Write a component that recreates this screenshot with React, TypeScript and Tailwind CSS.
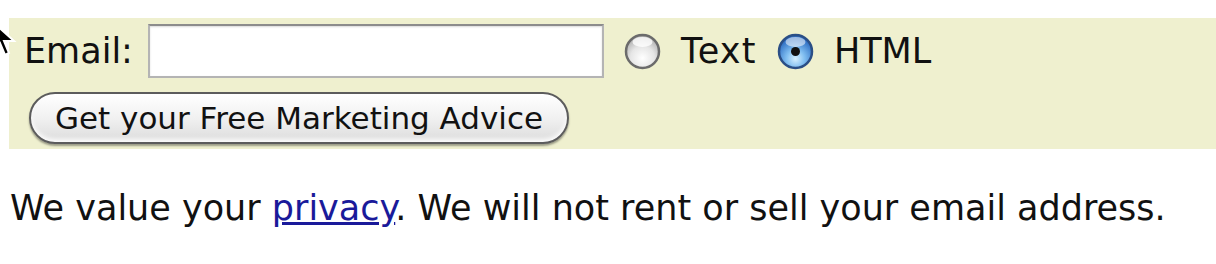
import { useState } from 'react';

// Newsletter signup strip: email field, format radios, submit button, privacy note

function AquaRadio({ checked }: { checked: boolean }) {
  return (
    <svg width="37" height="37" viewBox="0 0 37 37" aria-hidden="true">
      <defs>
        <radialGradient id="rg-off" cx="50%" cy="70%" r="60%">
          <stop offset="0%" stopColor="#ffffff" />
          <stop offset="60%" stopColor="#e6e6e6" />
          <stop offset="100%" stopColor="#b9b9b9" />
        </radialGradient>
        <radialGradient id="rg-on" cx="50%" cy="72%" r="62%">
          <stop offset="0%" stopColor="#d6f0ff" />
          <stop offset="45%" stopColor="#7fbdf0" />
          <stop offset="100%" stopColor="#2f6fc4" />
        </radialGradient>
      </defs>
      <circle
        cx="18.5"
        cy="18.5"
        r="16.5"
        fill={checked ? 'url(#rg-on)' : 'url(#rg-off)'}
        stroke={checked ? '#2b4f86' : '#6b6b6b'}
        strokeWidth="2.5"
      />
      <ellipse cx="18.5" cy="9" rx="10" ry="5" fill="#ffffff" opacity={checked ? 0.55 : 0.8} />
      {checked && <circle cx="18.5" cy="18.5" r="4.5" fill="#111111" />}
    </svg>
  );
}

function Cursor() {
  return (
    <svg
      className="absolute left-[-9px] top-[20px]"
      width="26"
      height="40"
      viewBox="0 0 26 40"
      aria-hidden="true"
    >
      <path d="M2 2 L2 30 L9 23 L14 35 L18 33 L13 21 L23 21 Z" fill="#000000" stroke="#ffffff" strokeWidth="2" />
    </svg>
  );
}

export default function App() {
  const [format, setFormat] = useState<'text' | 'html'>('html');
  const [email, setEmail] = useState('');

  return (
    <div
      className="relative w-[1216px] h-[264px] overflow-hidden bg-white text-[#111]"
      style={{ fontFamily: '"DejaVu Sans", Verdana, sans-serif' }}
    >
      <form
        className="ml-[9px] mt-[18px] h-[131px] bg-[#eff0cf] pl-[15px] pt-[6px]"
        onSubmit={(e) => e.preventDefault()}
      >
        <div className="flex items-center h-[54px]">
          <label className="text-[35px] leading-[40px]">Email:</label>
          <input
            type="text"
            value={email}
            onChange={(e) => setEmail(e.target.value)}
            className="ml-[15px] w-[456px] h-[54px] bg-white border-2 border-[#b4b4b4] border-t-[#8c8c8c] outline-none shadow-[inset_0_1px_2px_rgba(0,0,0,0.15)]"
          />
          <button
            type="button"
            onClick={() => setFormat('text')}
            className="ml-[20px] flex items-center"
          >
            <AquaRadio checked={format === 'text'} />
            <span className="ml-[20px] text-[35px] leading-[40px] tracking-[1.3px]">Text</span>
          </button>
          <button
            type="button"
            onClick={() => setFormat('html')}
            className="ml-[20px] flex items-center"
          >
            <AquaRadio checked={format === 'html'} />
            <span className="ml-[20px] text-[35px] leading-[40px]">HTML</span>
          </button>
        </div>

        <button
          type="submit"
          className="mt-[14px] ml-[5px] w-[540px] h-[52px] rounded-full border-2 border-[#5c5c5c] bg-linear-to-b from-[#ffffff] via-[#f1f1f1] to-[#dcdcdc] shadow-[0_2px_2px_rgba(0,0,0,0.35),inset_0_-3px_4px_rgba(255,255,255,0.9)] text-[31px] leading-[40px]"
        >
          Get your Free Marketing Advice
        </button>
      </form>

      <p className="ml-[10px] mt-[39px] text-[35px] leading-[40px] whitespace-nowrap">
        We value your{' '}
        <a href="#privacy" className="text-[#1a1a9a] underline">
          privacy
        </a>
        . We will not rent or sell your email address.
      </p>

      <Cursor />
    </div>
  );
}
